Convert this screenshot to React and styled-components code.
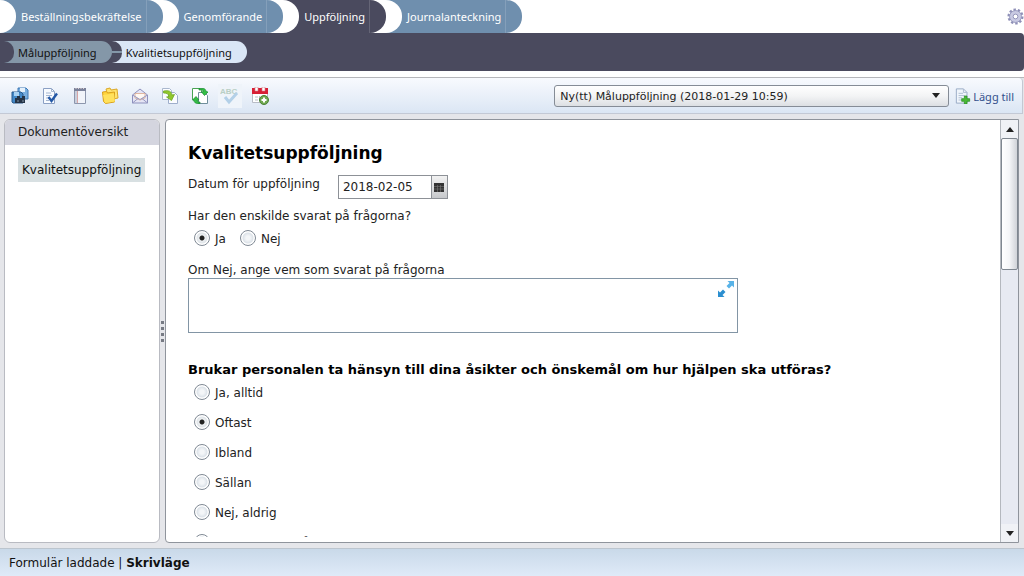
import React from 'react'
import styled, { createGlobalStyle, css } from 'styled-components'

const GlobalStyle = createGlobalStyle`
  * {
    box-sizing: border-box;
  }

  body {
    margin: 0;
    background: #fff;
    color: #222;
    font-family: 'DejaVu Sans', Verdana, sans-serif;
    font-size: 12px;
  }

  button, input, select, textarea {
    margin: 0;
    color: inherit;
    font: inherit;
  }
`

const condensed = css`
  font-family: 'Noto Sans', Tahoma, sans-serif;
  font-size: 11px;
`

const Page = styled.div`
  display: flex;
  flex-direction: column;
  height: 100vh;
  overflow: hidden;
`

const TopBar = styled.header`
  display: flex;
  flex: none;
  justify-content: space-between;
  height: 33px;
`

const Tabs = styled.nav`
  display: flex;
`

const Tab = styled.a`
  ${condensed}
  position: relative;
  display: flex;
  align-items: center;
  height: 33px;
  padding: 0 21px;
  border-radius: 0 16px 16px 0;
  background: ${props => props.$active ? '#4a4a5e' : '#6f8fae'};
  color: #fff;
  text-decoration: none;
  white-space: nowrap;

  &:before {
    position: absolute;
    top: 0;
    left: 0;
    width: 16px;
    height: 100%;
    border-radius: 0 16px 16px 0;
    background: #fff;
    content: '';
  }

  &:after {
    position: absolute;
    top: 0;
    right: 16px;
    width: 1px;
    height: 100%;
    background: rgba(255, 255, 255, .15);
    content: '';
  }
`

const SettingsButton = styled.button`
  display: flex;
  align-items: center;
  padding: 0;
  border: 0;
  background: none;
`

const SubBar = styled.nav`
  display: flex;
  flex: none;
  align-items: center;
  height: 38px;
  padding-left: 4px;
  border-radius: 0 4px 4px 0;
  background: #4a4a5e;
`

const Crumb = styled.a`
  ${condensed}
  position: relative;
  display: flex;
  align-items: center;
  height: 22px;
  padding: 0 15px 0 14px;
  border-radius: 0 11px 11px 0;
  background: ${props => props.$active ? '#dae6f6' : '#8497a8'};
  color: #111;
  text-decoration: none;
  white-space: nowrap;

  &:before {
    position: absolute;
    top: 0;
    left: 0;
    width: 10px;
    height: 100%;
    border-radius: 0 11px 11px 0;
    background: ${props => props.$active
      ? 'linear-gradient(#4a4a5e 10px, #8497a8 10px, #8497a8 12px, #4a4a5e 12px)'
      : '#4a4a5e'};
    content: '';
  }
`

const Workspace = styled.div`
  display: flex;
  flex: 1;
  flex-direction: column;
  min-height: 0;
  margin-top: 6px;
  border-top: 1px solid #b5b6ba;
  background: #e5e6ea;
`

const Toolbar = styled.div`
  display: flex;
  flex: none;
  align-items: center;
  justify-content: space-between;
  height: 36px;
  margin-right: 1px;
  padding: 1px 8px 0;
  border-right: 1px solid #c4c8d2;
  border-bottom: 1px solid #c3c9d5;
  border-radius: 0 4px 0 0;
  background: linear-gradient(#f8fafe, #dbe6f4);
`

const ToolGroup = styled.div`
  display: flex;
  align-items: center;
  gap: 6px;
`

const ToolButton = styled.button`
  display: flex;
  align-items: center;
  justify-content: center;
  width: 24px;
  height: 24px;
  padding: 0;
  border: 0;
  background: ${props => props.disabled ? '#eff4fa' : 'none'};
`

const SelectWrapper = styled.div`
  position: relative;
  width: 395px;

  svg {
    position: absolute;
    top: 8px;
    right: 9px;
    pointer-events: none;
  }
`

const DocumentSelect = styled.select`
  display: block;
  width: 100%;
  height: 22px;
  padding: 0 24px 0 5px;
  border: 1px solid #858c96;
  border-radius: 3px;
  background: linear-gradient(#fff, #f3f4f5 50%, #dcdfe3);
  font-size: 11px;
  appearance: none;
`

const AddLink = styled.a`
  ${condensed}
  display: flex;
  align-items: center;
  gap: 2px;
  color: #34508c;
  text-decoration: none;
`

const Body = styled.div`
  display: flex;
  flex: 1;
  min-height: 0;
  padding: 5px 5px 5px 4px;
`

const Sidebar = styled.aside`
  flex: none;
  width: 156px;
  overflow: hidden;
  border: 1px solid #b9bbc2;
  border-radius: 6px;
  background: #fff;
`

const SidebarTitle = styled.h2`
  margin: 0;
  padding: 0 13px;
  background: #d4d5df;
  font-size: 12px;
  font-weight: normal;
  line-height: 25px;
`

const SidebarLink = styled.a`
  display: inline-block;
  margin: 13px;
  padding: 0 4px;
  background: #d8e0e2;
  color: #111;
  line-height: 24px;
  text-decoration: none;
`

const Splitter = styled.div`
  display: flex;
  flex: none;
  flex-direction: column;
  align-items: center;
  justify-content: center;
  gap: 3px;
  width: 5px;
`

const Dot = styled.span`
  width: 3px;
  height: 3px;
  background: #777b84;
`

const Panel = styled.main`
  display: flex;
  flex: 1;
  min-width: 0;
  border: 1px solid #8f949c;
  border-radius: 4px 0 0 4px;
  background: #fff;
`

const Form = styled.form`
  flex: 1;
  min-width: 0;
  margin-bottom: 5px;
  padding: 20px 22px 0;
  overflow: hidden;
`

const Title = styled.h1`
  margin: 0;
  color: #000;
  font-size: 17px;
  line-height: 26px;
`

const DateRow = styled.div`
  display: flex;
  align-items: flex-start;
  gap: 18px;
  margin-top: 9px;
  line-height: 18px;
`

const DateField = styled.div`
  display: flex;
  width: 110px;
  height: 24px;
  border: 1px solid #8d9197;
`

const DateInput = styled.input`
  flex: 1;
  min-width: 0;
  padding: 0 4px;
  border: 0;
  background: #fff;
`

const CalendarButton = styled.button`
  display: flex;
  align-items: center;
  justify-content: center;
  width: 16px;
  padding: 0;
  border: 0;
  border-left: 1px solid #8d9197;
  background: linear-gradient(#f2f2f2, #c6c8cb);
`

const Fieldset = styled.fieldset`
  min-width: 0;
  margin: ${props => props.$bold ? '28px' : '8px'} 0 0;
  padding: 0;
  border: 0;
`

const Legend = styled.legend`
  padding: 0;
  line-height: 18px;
  ${props => props.$bold && css`
    color: #000;
    font-size: 13px;
    font-weight: bold;
  `}
`

const Options = styled.div`
  display: flex;
  flex-direction: ${props => props.$column ? 'column' : 'row'};
  gap: ${props => props.$column ? '6px' : '14px'};
  padding: 1px 6px 0;
`

const Option = styled.label`
  display: flex;
  align-items: center;
  gap: 5px;
  height: 24px;
  white-space: nowrap;

  span {
    padding-top: 2px;
  }
`

const Radio = styled.input`
  flex: none;
  width: 16px;
  height: 16px;
  border: 1px solid #7f8994;
  border-radius: 50%;
  background: ${props => props.defaultChecked
    ? 'radial-gradient(circle, #222 2px, #eef1f3 3px, #dfe4e8 5px, #fff 6px)'
    : 'radial-gradient(circle, #f4f6f8 2px, #dde3e9 5px, #fff 6px)'};
  appearance: none;
`

const TextBlock = styled.div`
  position: relative;
  width: 550px;
  max-width: 100%;
  margin-top: 12px;

  label {
    display: block;
    line-height: 16px;
  }
`

const TextArea = styled.textarea`
  display: block;
  width: 100%;
  height: 55px;
  padding: 4px 28px 4px 4px;
  border: 1px solid #8295a5;
  resize: none;
`

const ExpandButton = styled.button`
  position: absolute;
  top: 18px;
  right: 3px;
  display: flex;
  padding: 0;
  border: 0;
  background: none;
`

const Scrollbar = styled.div`
  display: flex;
  flex: none;
  flex-direction: column;
  width: 18px;
  border-left: 1px solid #b4b8be;
  background: #e7eaf2;
`

const ScrollButton = styled.button`
  display: flex;
  flex: none;
  align-items: center;
  justify-content: center;
  height: 18px;
  padding: 0;
  border: 0;
  background: #f0f2f6;
`

const ScrollTrack = styled.div`
  flex: 1;
`

const ScrollThumb = styled.div`
  height: 132px;
  border: 1px solid #7f8790;
  border-radius: 2px;
  background: linear-gradient(90deg, #fff, #f4f5f7 50%, #d0d3d8);
`

const StatusBar = styled.footer`
  flex: none;
  height: 28px;
  padding: 0 9px;
  border-top: 1px solid #bcc5ce;
  background: linear-gradient(#c9d9e9, #dfeaf8);
  color: #111;
  line-height: 28px;
`

const Icon = ({ size = 18, children }) => (
  <svg width={size} height={size} viewBox="0 0 18 18" fill="none" aria-hidden="true">{children}</svg>
)

const SaveIcon = () => (
  <Icon>
    <path d="M7 1h8l2 2v9H7z" fill="#78aee0" stroke="#3f78b4" />
    <path d="M9 1h5v4H9z" fill="#e4f0fb" />
    <path d="M1 5h9l2 2v9H2l-1-1z" fill="#4389c8" stroke="#28598b" />
    <path d="M3 5h5v4H3z" fill="#a8d1f2" />
    <path d="M4 11h10v5H4z" fill="#253447" />
    <path d="M6 9h3v3H6zM11 9h3v3h-3z" fill="#253447" />
    <path d="M6 14h2M11 14h2" stroke="#8798aa" />
  </Icon>
)

const CheckDocIcon = () => (
  <Icon>
    <path d="M2.500 1.500h8l3 3v12h-11z" fill="#f8fbff" stroke="#8ba0c4" />
    <path d="M10.500 1.500v3h3M5 6h5M5 8.500h6M5 11h3M5 13.500h3" stroke="#a4b6d1" />
    <path d="M7.500 10l3 4L16 6.500" stroke="#2458a6" strokeWidth="2.400" />
  </Icon>
)

const NotebookIcon = () => (
  <Icon>
    <path d="M3.500 2.500h11v14h-11z" fill="#f1f4fa" stroke="#8c96ad" />
    <path d="M3 1h12v3H3z" fill="#7b829b" />
    <path d="M4 4h2v12H4z" fill="#c9cfdd" />
    <path d="M6.500 4v12" stroke="#d7a5a5" />
    <path d="M5 1v1M7.500 1v1M10 1v1M12.500 1v1" stroke="#e3d5d5" />
  </Icon>
)

const FolderIcon = () => (
  <Icon>
    <path d="M5 2l4-1 1 2 6-1 1 9-9 2z" fill="#ffe36d" stroke="#dca92a" />
    <path d="M1.500 5l4-.5 1 1.500 7-1v10l-9 1.500-2-2z" fill="#ffd43d" stroke="#d9a01d" />
    <path d="M2 8l11-1.500 1 8-10 1.500z" fill="#ffe15c" />
  </Icon>
)

const MailIcon = () => (
  <Icon>
    <path d="M1.500 8L9 2l7.500 6v8h-15z" fill="#e5e5f5" stroke="#8e91bd" />
    <path d="M4 6.500h10V11l-5 2-5-2z" fill="#fff8f2" stroke="#dfb6a0" />
    <path d="M1.500 8L9 12.500 16.500 8M1.500 16L7 11.500M16.500 16L11 11.500" stroke="#9699c3" />
  </Icon>
)

const CopyIcon = () => (
  <Icon>
    <path d="M1.500 1.500h7l2 2v9h-9z" fill="#fbfcff" stroke="#aab8ce" />
    <path d="M7.500 5.500h6l3 3v8h-9z" fill="#fbfcff" stroke="#9eaecb" />
    <path d="M2.500 4c5-1 8 0 8.500 4l2.500-.5-3 6L5.500 10l2.500-.5C7.500 7 6 6 2.500 6z" fill="#91c72d" stroke="#64a11e" strokeWidth=".7" />
  </Icon>
)

const RefreshIcon = () => (
  <Icon>
    <path d="M1.500 1.500h7l2 2v9h-9z" fill="#fff" stroke="#49a353" />
    <path d="M7.500 5.500h6l3 3v8h-9z" fill="#fff" stroke="#6f8e9b" />
    <path d="M8 1.500h4c2 0 3 1.500 3 3l2 .5-3.500 3.500L10.500 5l2-.5-1-1.500H8z" fill="#33bf45" stroke="#168a2d" strokeWidth=".7" />
    <path d="M9 16.500H7c-3 0-4-1.500-4-3L1.500 13 5 9.500 8 13l-2 .5 1 1.500h2z" fill="#33bf45" stroke="#168a2d" strokeWidth=".7" />
  </Icon>
)

const SpellIcon = () => (
  <svg width="20" height="20" viewBox="0 0 20 20" fill="none" aria-hidden="true">
    <text x="0" y="8" fill="#b9cfc5" fontFamily="Liberation Sans, sans-serif" fontSize="8" fontWeight="bold">ABC</text>
    <path d="M5 11l4 5 8-9" stroke="#b3d0e8" strokeWidth="3" />
  </svg>
)

const CalendarIcon = () => (
  <Icon>
    <path d="M1.500 2.500h15v13h-15z" fill="#fff" stroke="#b8bcc6" />
    <path d="M1 1h16v6H1z" fill="#d71f35" />
    <path d="M4 0h3v4H4zM11 0h3v4h-3z" fill="#fff" stroke="#d37d86" strokeWidth=".6" />
    <path d="M4 10h3M4 13h3M8.500 9v5" stroke="#b8bdc8" />
    <circle cx="13" cy="13" r="4.500" fill="#6fa84e" stroke="#4b8238" />
    <path d="M13 10.500v5M10.500 13h5" stroke="#fff" strokeWidth="2" />
  </Icon>
)

const AddDocIcon = () => (
  <Icon size={16}>
    <path d="M1.500 1h8l4 4v12h-12z" fill="#f0f5fb" stroke="#91a5c1" />
    <path d="M9.500 1v4h4M4 6h5M4 8.500h7M4 11h4M4 13.500h3" stroke="#a9b9cf" />
    <path d="M10.500 9h3v3h3v3h-3v3h-3v-3h-3v-3h3z" fill="#49b935" stroke="#278b22" strokeWidth=".8" />
  </Icon>
)

const GearIcon = () => (
  <svg width="17" height="17" viewBox="0 0 18 18" aria-hidden="true">
    <circle cx="9" cy="9" r="7.200" fill="none" stroke="#8e8fb7" strokeWidth="2.600" strokeDasharray="2.500 2.020" />
    <circle cx="9" cy="9" r="6.300" fill="#c8c9e2" stroke="#9698bd" />
    <circle cx="9" cy="9" r="2.500" fill="#fff" stroke="#9092b8" />
  </svg>
)

const Triangle = ({ up }) => (
  <svg width="8" height="5" viewBox="0 0 8 5" aria-hidden="true">
    <path d={up ? 'M0 5l4-5 4 5z' : 'M0 0h8L4 5z'} fill="#222" />
  </svg>
)

const t = (title, icon, disabled) => ({ title, icon, disabled })

const tools = [
  t('Spara', <SaveIcon />),
  t('Signera', <CheckDocIcon />),
  t('Anteckning', <NotebookIcon />),
  t('Mapp', <FolderIcon />),
  t('Meddelande', <MailIcon />),
  t('Kopiera', <CopyIcon />),
  t('Uppdatera', <RefreshIcon />),
  t('Stavning', <SpellIcon />, true),
  t('Kalender', <CalendarIcon />),
]

const tabs = ['Beställningsbekräftelse', 'Genomförande', 'Uppföljning', 'Journalanteckning']
const crumbs = ['Måluppföljning', 'Kvalitietsuppföljning']
const answers = ['Ja, alltid', 'Oftast', 'Ibland', 'Sällan', 'Nej, aldrig', 'Vet inte/ingen åsikt']

const RadioGroup = ({ name, legend, options, selected, column }) => (
  <Fieldset $bold={column}>
    <Legend $bold={column}>{legend}</Legend>
    <Options $column={column}>
      {options.map(option => (
        <Option key={option}>
          <Radio type="radio" name={name} value={option} defaultChecked={option === selected} />
          <span>{option}</span>
        </Option>
      ))}
    </Options>
  </Fieldset>
)

const App = () => (
  <Page>
    <GlobalStyle />
    <TopBar>
      <Tabs>
        {tabs.map(tab => (
          <Tab key={tab} href="#" $active={tab === 'Uppföljning'}>{tab}</Tab>
        ))}
      </Tabs>
      <SettingsButton aria-label="Inställningar"><GearIcon /></SettingsButton>
    </TopBar>
    <SubBar>
      {crumbs.map((crumb, index) => (
        <Crumb key={crumb} href="#" $active={index === 1}>{crumb}</Crumb>
      ))}
    </SubBar>
    <Workspace>
      <Toolbar>
        <ToolGroup>
          {tools.map(({ title, icon, disabled }) => (
            <ToolButton key={title} aria-label={title} disabled={disabled}>{icon}</ToolButton>
          ))}
        </ToolGroup>
        <ToolGroup>
          <SelectWrapper>
            <DocumentSelect aria-label="Dokument">
              <option>Ny(tt) Måluppföljning (2018-01-29 10:59)</option>
            </DocumentSelect>
            <Triangle />
          </SelectWrapper>
          <AddLink href="#"><AddDocIcon />Lägg till</AddLink>
        </ToolGroup>
      </Toolbar>
      <Body>
        <Sidebar>
          <SidebarTitle>Dokumentöversikt</SidebarTitle>
          <SidebarLink href="#">Kvalitetsuppföljning</SidebarLink>
        </Sidebar>
        <Splitter>
          <Dot />
          <Dot />
          <Dot />
          <Dot />
        </Splitter>
        <Panel>
          <Form>
            <Title>Kvalitetsuppföljning</Title>
            <DateRow>
              <label htmlFor="date">Datum för uppföljning</label>
              <DateField>
                <DateInput id="date" defaultValue="2018-02-05" />
                <CalendarButton type="button" aria-label="Välj datum">
                  <svg width="10" height="9" viewBox="0 0 10 9" aria-hidden="true">
                    <path d="M0 0h10v9H0z" fill="#333" />
                    <path d="M0 3.500h10M0 6h10M3.500 2v7M6.500 2v7" stroke="#777" strokeWidth=".6" />
                  </svg>
                </CalendarButton>
              </DateField>
            </DateRow>
            <RadioGroup
              name="answered"
              legend="Har den enskilde svarat på frågorna?"
              options={['Ja', 'Nej']}
              selected="Ja"
            />
            <TextBlock>
              <label htmlFor="who">Om Nej, ange vem som svarat på frågorna</label>
              <TextArea id="who" />
              <ExpandButton type="button" aria-label="Förstora">
                <Icon>
                  <path d="M10.500 1H17v6.500l-2-2-3 3L9.500 6l3-3z" fill="#58b3e8" />
                  <path d="M1 10.500l2 2 3-3L8.500 12l-3 3 2 2H1z" fill="#2b8fd0" />
                </Icon>
              </ExpandButton>
            </TextBlock>
            <RadioGroup
              name="respect"
              legend="Brukar personalen ta hänsyn till dina åsikter och önskemål om hur hjälpen ska utföras?"
              options={answers}
              selected="Oftast"
              column
            />
          </Form>
          <Scrollbar>
            <ScrollButton aria-label="Rulla upp"><Triangle up /></ScrollButton>
            <ScrollTrack><ScrollThumb /></ScrollTrack>
            <ScrollButton aria-label="Rulla ned"><Triangle /></ScrollButton>
          </Scrollbar>
        </Panel>
      </Body>
    </Workspace>
    <StatusBar>Formulär laddade | <b>Skrivläge</b></StatusBar>
  </Page>
)

export default App
